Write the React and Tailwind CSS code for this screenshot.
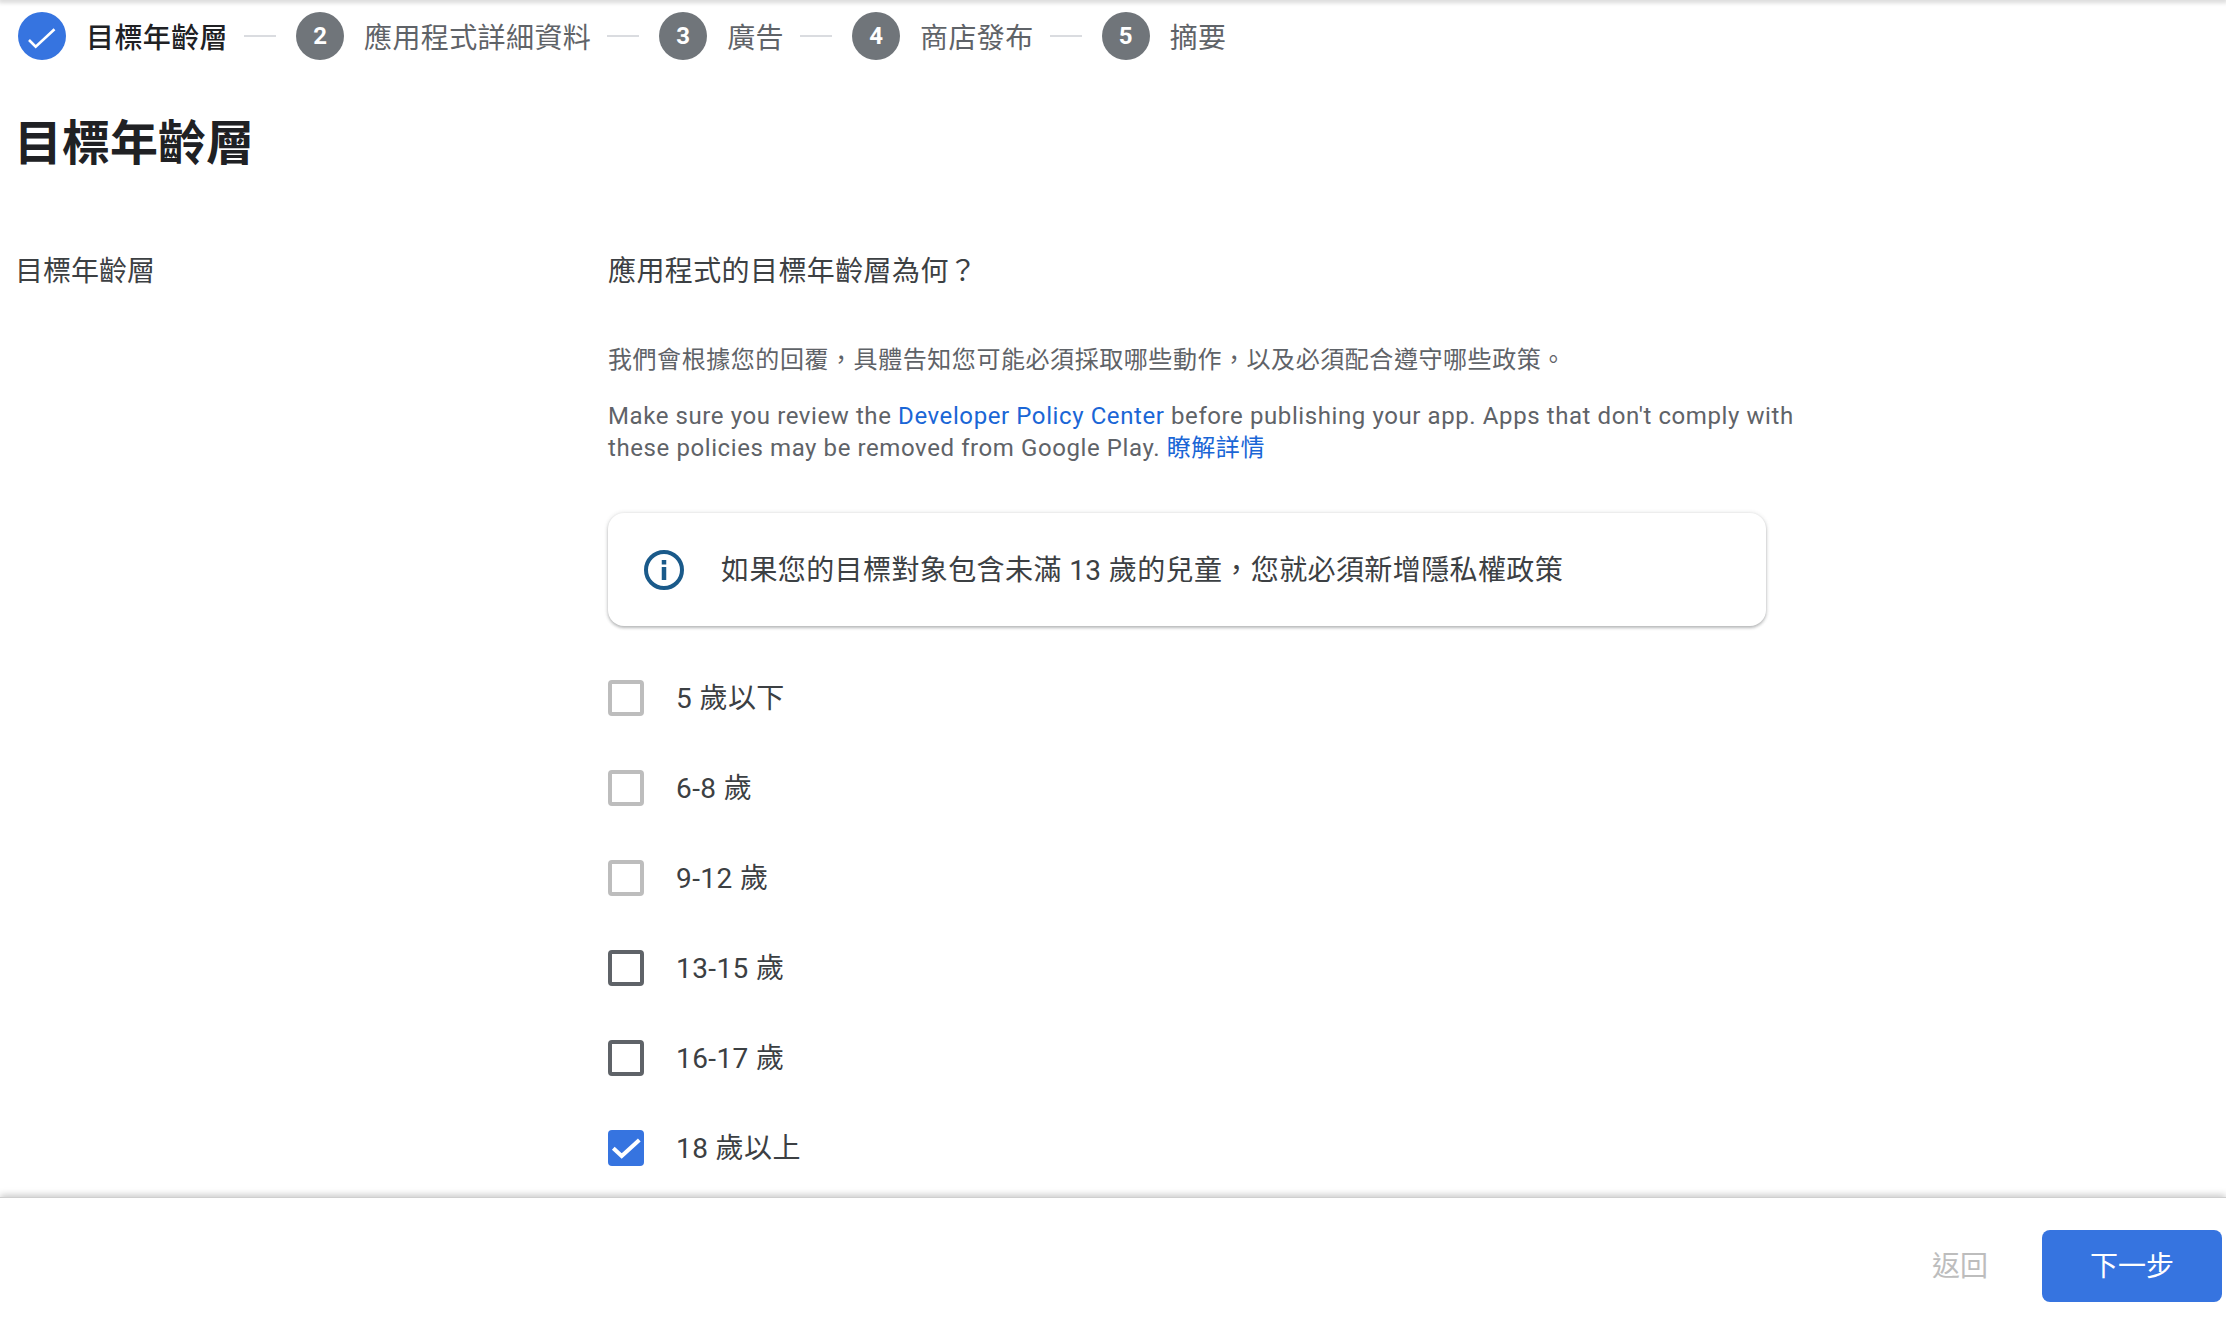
const FONT = 'font-["Roboto","Noto_Sans_CJK_TC",sans-serif]';

const STEPS = [
  { label: '應用程式詳細資料', num: 2 },
  { label: '廣告', num: 3 },
  { label: '商店發布', num: 4 },
  { label: '摘要', num: 5 },
];

const AGES = [
  { label: '5 歲以下', tone: 'light' },
  { label: '6-8 歲', tone: 'light' },
  { label: '9-12 歲', tone: 'light' },
  { label: '13-15 歲', tone: 'dark' },
  { label: '16-17 歲', tone: 'dark' },
  { label: '18 歲以上', tone: 'checked' },
];

const Stepper = () => (
  <div className="flex items-center h-12 mt-3 ml-[18px]">
    <div className="flex items-center justify-center w-12 h-12 rounded-full bg-[#3674e0] shrink-0">
      <svg width="48" height="48" viewBox="0 0 48 48" fill="none">
        <path d="M11 28l6.7 6.7L36.5 17.3" stroke="#fff" strokeWidth="2.6" />
      </svg>
    </div>
    <span className="ml-5 pt-[5px] text-[28px] leading-none tracking-[0.4px] font-medium text-[#202124]">目標年齡層</span>
    {STEPS.map((step) => (
      <div key={step.num} className="flex items-center">
        <div className="ml-4 mr-5 w-8 h-0.5 bg-[#dadce0]" />
        <div className="flex items-center justify-center w-12 h-12 rounded-full bg-[#70757a] text-white text-[24px] font-bold shrink-0">
          {step.num}
        </div>
        <span className="ml-5 pt-[5px] text-[28px] leading-none tracking-[0.4px] text-[#5f6368] whitespace-nowrap">{step.label}</span>
      </div>
    ))}
  </div>
);

const InfoCard = () => (
  <div className="flex items-center mt-[49px] w-[1158px] h-[113px] rounded-2xl bg-white shadow-[0_2px_3px_rgba(60,64,67,0.3),0_0_4px_rgba(60,64,67,0.18)]">
    <svg className="ml-9 shrink-0" width="40" height="40" viewBox="0 0 40 40" fill="none">
      <circle cx="20" cy="20" r="18" stroke="#1a5a8a" strokeWidth="4" />
      <rect x="17.75" y="17" width="4.5" height="13" fill="#1a5a8a" />
      <rect x="17.75" y="10" width="4.5" height="4.5" fill="#1a5a8a" />
    </svg>
    <span className="ml-[37px] pt-0.5 text-[28px] tracking-[0.4px] text-[#3c4043] whitespace-nowrap">
      如果您的目標對象包含未滿 13 歲的兒童，您就必須新增隱私權政策
    </span>
  </div>
);

const AgeRow = ({ label, tone }) => {
  const boxClass =
    tone === 'checked'
      ? 'bg-[#3674e0]'
      : tone === 'dark'
        ? 'border-4 border-[#5f6368]'
        : 'border-4 border-[#bdbdbd]';

  return (
    <div className="flex items-center h-[90px]">
      <div className={`w-9 h-9 rounded shrink-0 ${boxClass}`}>
        {tone === 'checked' && (
          <svg width="36" height="36" viewBox="0 0 36 36" fill="none">
            <path d="M5.3 18.3l8.4 7.7L31.3 10" stroke="#fff" strokeWidth="4" />
          </svg>
        )}
      </div>
      <span className="ml-8 pt-0.5 text-[28px] tracking-[0.4px] text-[#3c4043]">{label}</span>
    </div>
  );
};

export default function App() {
  return (
    <div className={`flex flex-col h-screen overflow-hidden bg-white ${FONT}`}>
      <div className="h-0 shadow-[0_0_5px_2px_rgba(0,0,0,0.22)]" />
      <Stepper />

      <div className="flex-1 overflow-hidden">
        <h1 className="mt-[52px] ml-[14px] text-[48px] leading-[64px] font-bold text-[#202124]">目標年齡層</h1>

        <div className="flex mt-[76px] ml-[15px]">
          <div className="w-[593px] shrink-0 text-[28px] leading-10 text-[#3c4043]">目標年齡層</div>

          <div className="flex-1">
            <div className="text-[28px] leading-10 tracking-[0.4px] text-[#3c4043]">應用程式的目標年齡層為何？</div>
            <p className="mt-[52px] text-[24px] leading-8 tracking-[0.56px] text-[#5f6368]">
              我們會根據您的回覆，具體告知您可能必須採取哪些動作，以及必須配合遵守哪些政策。
            </p>
            <p className="mt-6 w-[1200px] text-[24px] leading-8 tracking-[0.59px] text-[#5f6368]">
              Make sure you review the <a className="text-[#1a66d6]">Developer Policy Center</a> before publishing your app. Apps that don't comply with these policies may be removed from Google Play. <a className="text-[#1a66d6]">瞭解詳情</a>
            </p>
            <InfoCard />
            <div className="mt-[27px]">
              {AGES.map((age) => (
                <AgeRow key={age.label} label={age.label} tone={age.tone} />
              ))}
            </div>
          </div>
        </div>
      </div>

      <div className="relative z-10 flex items-start justify-end shrink-0 h-[121px] pt-8 pr-1 bg-white border-t border-[#cfcfcf] shadow-[0_-2px_7px_rgba(0,0,0,0.22)]">
        <button className="mr-[54px] h-[72px] pt-0.5 text-[28px] text-[#bdbdbd]">返回</button>
        <button className="w-[180px] h-[72px] pt-0.5 rounded-lg bg-[#3674e0] text-white text-[28px]">下一步</button>
      </div>
    </div>
  );
}
